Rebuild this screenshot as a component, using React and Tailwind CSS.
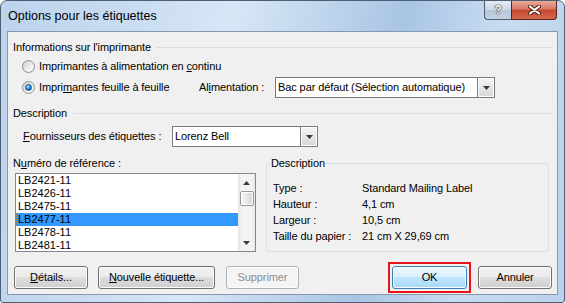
import React from "react";

const items = ["LB2421-11", "LB2426-11", "LB2475-11", "LB2477-11", "LB2478-11", "LB2481-11"];

const details = [
  ["Type :", "Standard Mailing Label"],
  ["Hauteur :", "4,1 cm"],
  ["Largeur :", "10,5 cm"],
  ["Taille du papier :", "21 cm X 29,69 cm"],
];

function Radio({ checked }) {
  return (
    <span className="w-[13px] h-[13px] shrink-0 rounded-full border border-[#8e8f8f] bg-[linear-gradient(135deg,#cfcfcf,#ececec_55%,#ffffff)] flex items-center justify-center">
      {checked && (
        <span className="w-[7px] h-[7px] rounded-full border border-[#1b4f88] bg-[radial-gradient(circle_at_35%_30%,#b3e2ff,#2a8ae0_50%,#0c3f7c)]" />
      )}
    </span>
  );
}

function Arrow({ up }) {
  return (
    <svg width="7" height="4" viewBox="0 0 7 4">
      {up ? <polygon points="0,4 7,4 3.5,0" fill="#3a3a3a" /> : <polygon points="0,0 7,0 3.5,4" fill="#3a3a3a" />}
    </svg>
  );
}

function Combo({ value, width }) {
  return (
    <div className={`${width} h-[21px] flex border border-[#7a7a7a] bg-white`}>
      <span className="flex-1 pl-[2px] flex items-center whitespace-nowrap overflow-hidden">{value}</span>
      <span className="w-[17px] border-l border-[#7a7a7a] bg-[linear-gradient(#f5f5f5,#e6e6e6_50%,#d6d6d6)] shadow-[inset_0_0_0_1px_#ffffff] flex items-center justify-center">
        <Arrow />
      </span>
    </div>
  );
}

function WinButton({ children, width, disabled, primary }) {
  let look =
    "border-[#707070] bg-[linear-gradient(#f2f2f2,#ebebeb_50%,#dddddd_50%,#cfcfcf)] text-black";
  if (primary) look = "border-[#3c7fb1] bg-[linear-gradient(#eaf6fd,#d9f0fc_50%,#bee6fd_50%,#a7d9f5)] text-black";
  if (disabled) look = "border-[#adb2b5] bg-[#f4f4f4] text-[#8d8d8d]";
  return (
    <div
      className={`${width} h-[23px] shrink-0 rounded-[3px] border ${look} shadow-[inset_0_0_0_1px_#fcfcfc] flex items-center justify-center`}
    >
      {children}
    </div>
  );
}

export default function App() {
  return (
    <div className="w-[565px] h-[303px] flex flex-col border border-[#4e5f74] rounded-t-[7px] rounded-b-[3px] bg-[linear-gradient(100deg,#bcd3ec_0%,#c9dcf1_22%,#d8e7f6_38%,#c0d6ed_52%,#a9c5e4_66%,#c8dcf1_82%,#bad2ec_100%)] font-['Liberation_Sans',Arial,sans-serif] text-[11px] tracking-[-0.1px] text-black overflow-hidden">
      {/* title bar */}
      <div className="h-[30px] flex items-start pl-[7px] pr-[7px]">
        <span className="self-center text-[12.5px] tracking-normal">Options pour les étiquettes</span>
        <div className="ml-auto flex">
          <span className="w-[27px] h-[19px] rounded-bl-[4px] border border-t-0 border-r-0 border-[#4c5b6d] bg-[linear-gradient(#e3ebf4,#ccd8e6_50%,#b4c5d8_50%,#c3d3e4)] flex items-center justify-center text-white font-bold text-[12px] [text-shadow:0_0_1px_#1d2a38,0_0_1px_#1d2a38,0_0_1px_#1d2a38]">
            ?
          </span>
          <span className="w-[46px] h-[19px] rounded-br-[4px] border border-t-0 border-[#5e2218] bg-[linear-gradient(#e8a899,#d87a66_45%,#c8472f_50%,#d3694f)] flex items-center justify-center">
            <svg width="13" height="10" viewBox="0 0 13 10">
              <path d="M2 1.5 L11 8.5 M11 1.5 L2 8.5" stroke="#4a1a12" strokeWidth="4" strokeLinecap="round" />
              <path d="M2 1.5 L11 8.5 M11 1.5 L2 8.5" stroke="#ffffff" strokeWidth="2.2" strokeLinecap="round" />
            </svg>
          </span>
        </div>
      </div>

      {/* client area */}
      <div className="mx-[6px] mb-[7px] h-[264px] border border-[#8598ae] bg-[#f0f0f0] flex flex-col pl-[5px] pr-[4px] pt-[8px]">
        <div className="h-[14px] flex items-center gap-[5px]">
          <span>Informations sur l'imprimante</span>
          <div className="flex-1 h-px bg-[#d5dfe5]" />
        </div>

        <div className="mt-[5px] h-[14px] flex items-center pl-[9px]">
          <Radio />
          <span className="ml-[4px]">
            Imprimantes à alimentation en <u>c</u>ontinu
          </span>
        </div>

        <div className="mt-[4px] h-[21px] flex items-center pl-[9px]">
          <div className="w-[177px] flex items-center">
            <Radio checked />
            <span className="ml-[4px]">
              Impri<u>m</u>antes feuille à feuille
            </span>
          </div>
          <span className="w-[76px]">
            Al<u>i</u>mentation :
          </span>
          <Combo width="w-[220px]" value="Bac par défaut (Sélection automatique)" />
        </div>

        <div className="mt-[8px] h-[14px] flex items-center gap-[6px] pr-[1px]">
          <span>Description</span>
          <div className="flex-1 h-px bg-[#d5dfe5]" />
        </div>

        <div className="mt-[6px] h-[21px] flex items-center pl-[10px]">
          <span className="w-[149px]">
            <u>F</u>ournisseurs des étiquettes :
          </span>
          <Combo width="w-[146px]" value="Lorenz Bell" />
        </div>

        <div className="mt-[9px] flex">
          <div className="w-[243px] flex flex-col">
            <span className="h-[14px] flex items-center">
              N<u>u</u>méro de référence :
            </span>
            <div className="mt-[3px] ml-[2px] h-[79px] border border-[#828790] bg-white flex overflow-hidden">
              <div className="flex-1 flex flex-col text-[11px] tracking-normal">
                {items.map((it) => (
                  <div
                    key={it}
                    className={
                      it === "LB2477-11"
                        ? "h-[13px] shrink-0 flex items-center pl-[1px] bg-[#3399ff] border border-dotted border-[#c8741c]"
                        : "h-[13px] shrink-0 flex items-center pl-[2px]"
                    }
                  >
                    {it}
                  </div>
                ))}
              </div>
              <div className="w-[17px] shrink-0 bg-[linear-gradient(90deg,#e3e3e3,#f3f3f3_20%,#f3f3f3_80%,#e8e8e8)] flex flex-col items-center">
                <div className="h-[17px] flex items-center justify-center">
                  <Arrow up />
                </div>
                <div className="w-[14px] h-[15px] rounded-[2px] border border-[#979797] bg-[linear-gradient(90deg,#f7f7f7,#e6e6e6_50%,#d6d6d6)] shadow-[inset_0_0_0_1px_#ffffff]" />
                <div className="mt-auto h-[17px] flex items-center justify-center">
                  <Arrow />
                </div>
              </div>
            </div>
          </div>

          <fieldset className="ml-[10px] w-[283px] h-[96px] border border-[#d5dfe5] rounded-[3px] pl-[6px] pt-[10px]">
            <legend className="-ml-[3px] px-[1px] h-[14px] leading-[14px]">Description</legend>
            {details.map(([k, v]) => (
              <div key={k} className="h-[16px] flex items-center">
                <span className="w-[89px]">{k}</span>
                <span>{v}</span>
              </div>
            ))}
          </fieldset>
        </div>

        <div className="mt-[14px] h-[23px] flex items-center">
          <div className="ml-[1px]">
            <WinButton width="w-[74px]">
              <u>D</u>étails...
            </WinButton>
          </div>
          <div className="ml-[10px]">
            <WinButton width="w-[117px]">
              <u>N</u>ouvelle étiquette...
            </WinButton>
          </div>
          <div className="ml-[11px]">
            <WinButton width="w-[73px]" disabled>
              Supprimer
            </WinButton>
          </div>
          <div className="ml-auto border-2 border-[#e8141c] p-[2px]">
            <WinButton width="w-[75px]" primary>
              OK
            </WinButton>
          </div>
          <div className="ml-[7px] mr-[1px]">
            <WinButton width="w-[74px]">Annuler</WinButton>
          </div>
        </div>
      </div>
    </div>
  );
}
